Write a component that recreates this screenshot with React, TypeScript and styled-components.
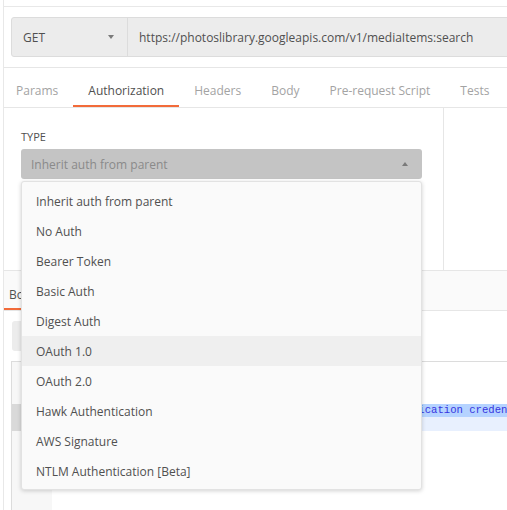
import styled, { createGlobalStyle } from 'styled-components';

const GlobalStyle = createGlobalStyle`
  html, body {
    margin: 0;
    padding: 0;
    background: #fff;
  }
  body {
    font-family: "Open Sans", "Liberation Sans", sans-serif;
    font-size: 12px;
    color: #505050;
  }
  * { box-sizing: border-box; }
`;

const Window = styled.div`
  width: 504px;
  height: 510px;
  margin-left: 3px;
  border-left: 1px solid #e8e8e8;
  overflow: hidden;
  display: flex;
  flex-direction: column;

  & > * {
    flex-shrink: 0;
  }
`;

const TopStrip = styled.div`
  height: 7px;
  border-bottom: 1px solid #e8e8e8;
`;

const RequestArea = styled.div`
  padding: 10px 0 10px 7px;
  border-bottom: 1px solid #e6e6e6;
`;

const UrlBar = styled.div`
  display: flex;
  width: 620px;
  height: 40px;
  border: 1px solid #dcdcdc;
  border-radius: 3px;
  background: #ececec;
  font-size: 12px;
`;

const Method = styled.div`
  flex: 0 0 116px;
  display: flex;
  align-items: center;
  justify-content: space-between;
  padding: 0 13px 0 11px;
  border-right: 1px solid #dcdcdc;
  color: #505050;
`;

const UrlText = styled.div`
  display: flex;
  align-items: center;
  padding-left: 11px;
  color: #505050;
`;

const Caret = styled.span<{ $up?: boolean }>`
  width: 0;
  height: 0;
  border-left: 3.5px solid transparent;
  border-right: 3.5px solid transparent;
  ${(p) => (p.$up ? 'border-bottom: 4px solid #7a7a7a;' : 'border-top: 4px solid #7a7a7a;')}
`;

const TabBar = styled.div<{ $shade?: boolean }>`
  display: flex;
  margin-left: -3px;
  height: 40px;
  border-bottom: 1px solid #e6e6e6;
  background: ${(p) => (p.$shade ? '#fafafa' : '#fff')};
`;

const Tab = styled.div<{ $active?: boolean; $top?: number }>`
  padding: ${(p) => p.$top ?? 15}px 15px 0;
  height: 39px;
  line-height: 16px;
  white-space: nowrap;
  color: ${(p) => (p.$active ? '#505050' : '#a3a3a3')};
  border-bottom: 2px solid ${(p) => (p.$active ? '#f26b3a' : 'transparent')};
`;

const ResponseTab = styled(Tab)`
  margin-left: -1px;
  padding-left: 9px;
  padding-right: 9px;
`;

const AuthSection = styled.div`
  display: flex;
  height: 163px;
  border-bottom: 1px solid #e6e6e6;
`;

const LeftPane = styled.div`
  flex: 0 0 440px;
  border-right: 1px solid #e6e6e6;
  padding: 21px 0 0 17px;
`;

const FieldLabel = styled.div`
  font-size: 11px;
  line-height: 15px;
  text-transform: uppercase;
  color: #505050;
`;

const SelectWrap = styled.div`
  position: relative;
  width: 401px;
  margin-top: 5px;
`;

const SelectBox = styled.div`
  height: 30px;
  display: flex;
  align-items: center;
  justify-content: space-between;
  padding: 0 14px 0 10px;
  background: #c4c4c4;
  border-radius: 3px;
  color: #8a8a8a;
`;

const Menu = styled.ul`
  position: absolute;
  top: calc(100% + 2px);
  left: 0;
  right: 0;
  margin: 0;
  padding: 4px 0 3px;
  list-style: none;
  background: #fafafa;
  border: 1px solid #e2e2e2;
  border-radius: 3px;
  box-shadow: 0 1px 4px rgba(0, 0, 0, 0.18);
  z-index: 10;
`;

const MenuItem = styled.li<{ $hover?: boolean }>`
  height: 30px;
  padding: 2px 0 0 14px;
  line-height: 28px;
  color: #505050;
  background: ${(p) => (p.$hover ? '#efefef' : 'transparent')};
`;

const ResponseBody = styled.div`
  padding: 10px 0 0 7px;
`;

const ViewToggle = styled.div`
  width: 90px;
  height: 30px;
  margin-left: 1px;
  background: #ececec;
  border-radius: 3px;
`;

const Editor = styled.div`
  display: flex;
  width: 620px;
  height: 200px;
  margin-top: 10px;
  border: 1px solid #dcdcdc;
`;

const Gutter = styled.div`
  flex: 0 0 40px;
  padding-top: 42px;
  background: #f7f7f7;
`;

const GutterMark = styled.div`
  height: 27px;
  background: #d9d9d9;
`;

const Code = styled.div`
  flex: 1;
  padding-top: 42px;
`;

const CodeLine = styled.div`
  height: 27px;
  background: #e8f0fe;
`;

const Selected = styled.div`
  height: 13px;
  line-height: 13px;
  padding-left: 4px;
  background: #b5d3ff;
  font-family: "Liberation Mono", "DejaVu Sans Mono", monospace;
  font-size: 10.6px;
  color: #3535e0;
  white-space: pre;
`;

const authTypes = [
  'Inherit auth from parent',
  'No Auth',
  'Bearer Token',
  'Basic Auth',
  'Digest Auth',
  'OAuth 1.0',
  'OAuth 2.0',
  'Hawk Authentication',
  'AWS Signature',
  'NTLM Authentication [Beta]',
];

const requestTabs = ['Params', 'Authorization', 'Headers', 'Body', 'Pre-request Script', 'Tests'];

export default function App() {
  return (
    <>
      <GlobalStyle />
      <Window>
        <TopStrip />
        <RequestArea>
          <UrlBar>
            <Method>
              GET
              <Caret />
            </Method>
            <UrlText>https://photoslibrary.googleapis.com/v1/mediaItems:search</UrlText>
          </UrlBar>
        </RequestArea>

        <TabBar>
          {requestTabs.map((t) => (
            <Tab key={t} $active={t === 'Authorization'}>
              {t}
            </Tab>
          ))}
        </TabBar>

        <AuthSection>
          <LeftPane>
            <FieldLabel>Type</FieldLabel>
            <SelectWrap>
              <SelectBox>
                Inherit auth from parent
                <Caret $up />
              </SelectBox>
              <Menu>
                {authTypes.map((a) => (
                  <MenuItem key={a} $hover={a === 'OAuth 1.0'}>
                    {a}
                  </MenuItem>
                ))}
              </Menu>
            </SelectWrap>
          </LeftPane>
        </AuthSection>

        <TabBar $shade>
          <ResponseTab $active $top={16}>
            Body
          </ResponseTab>
        </TabBar>

        <ResponseBody>
          <ViewToggle />
          <Editor>
            <Gutter>
              <GutterMark />
            </Gutter>
            <Code>
              <CodeLine>
                <Selected>{'  "message": "The request is missing the required authentication credentials."'}</Selected>
              </CodeLine>
            </Code>
          </Editor>
        </ResponseBody>
      </Window>
    </>
  );
}
